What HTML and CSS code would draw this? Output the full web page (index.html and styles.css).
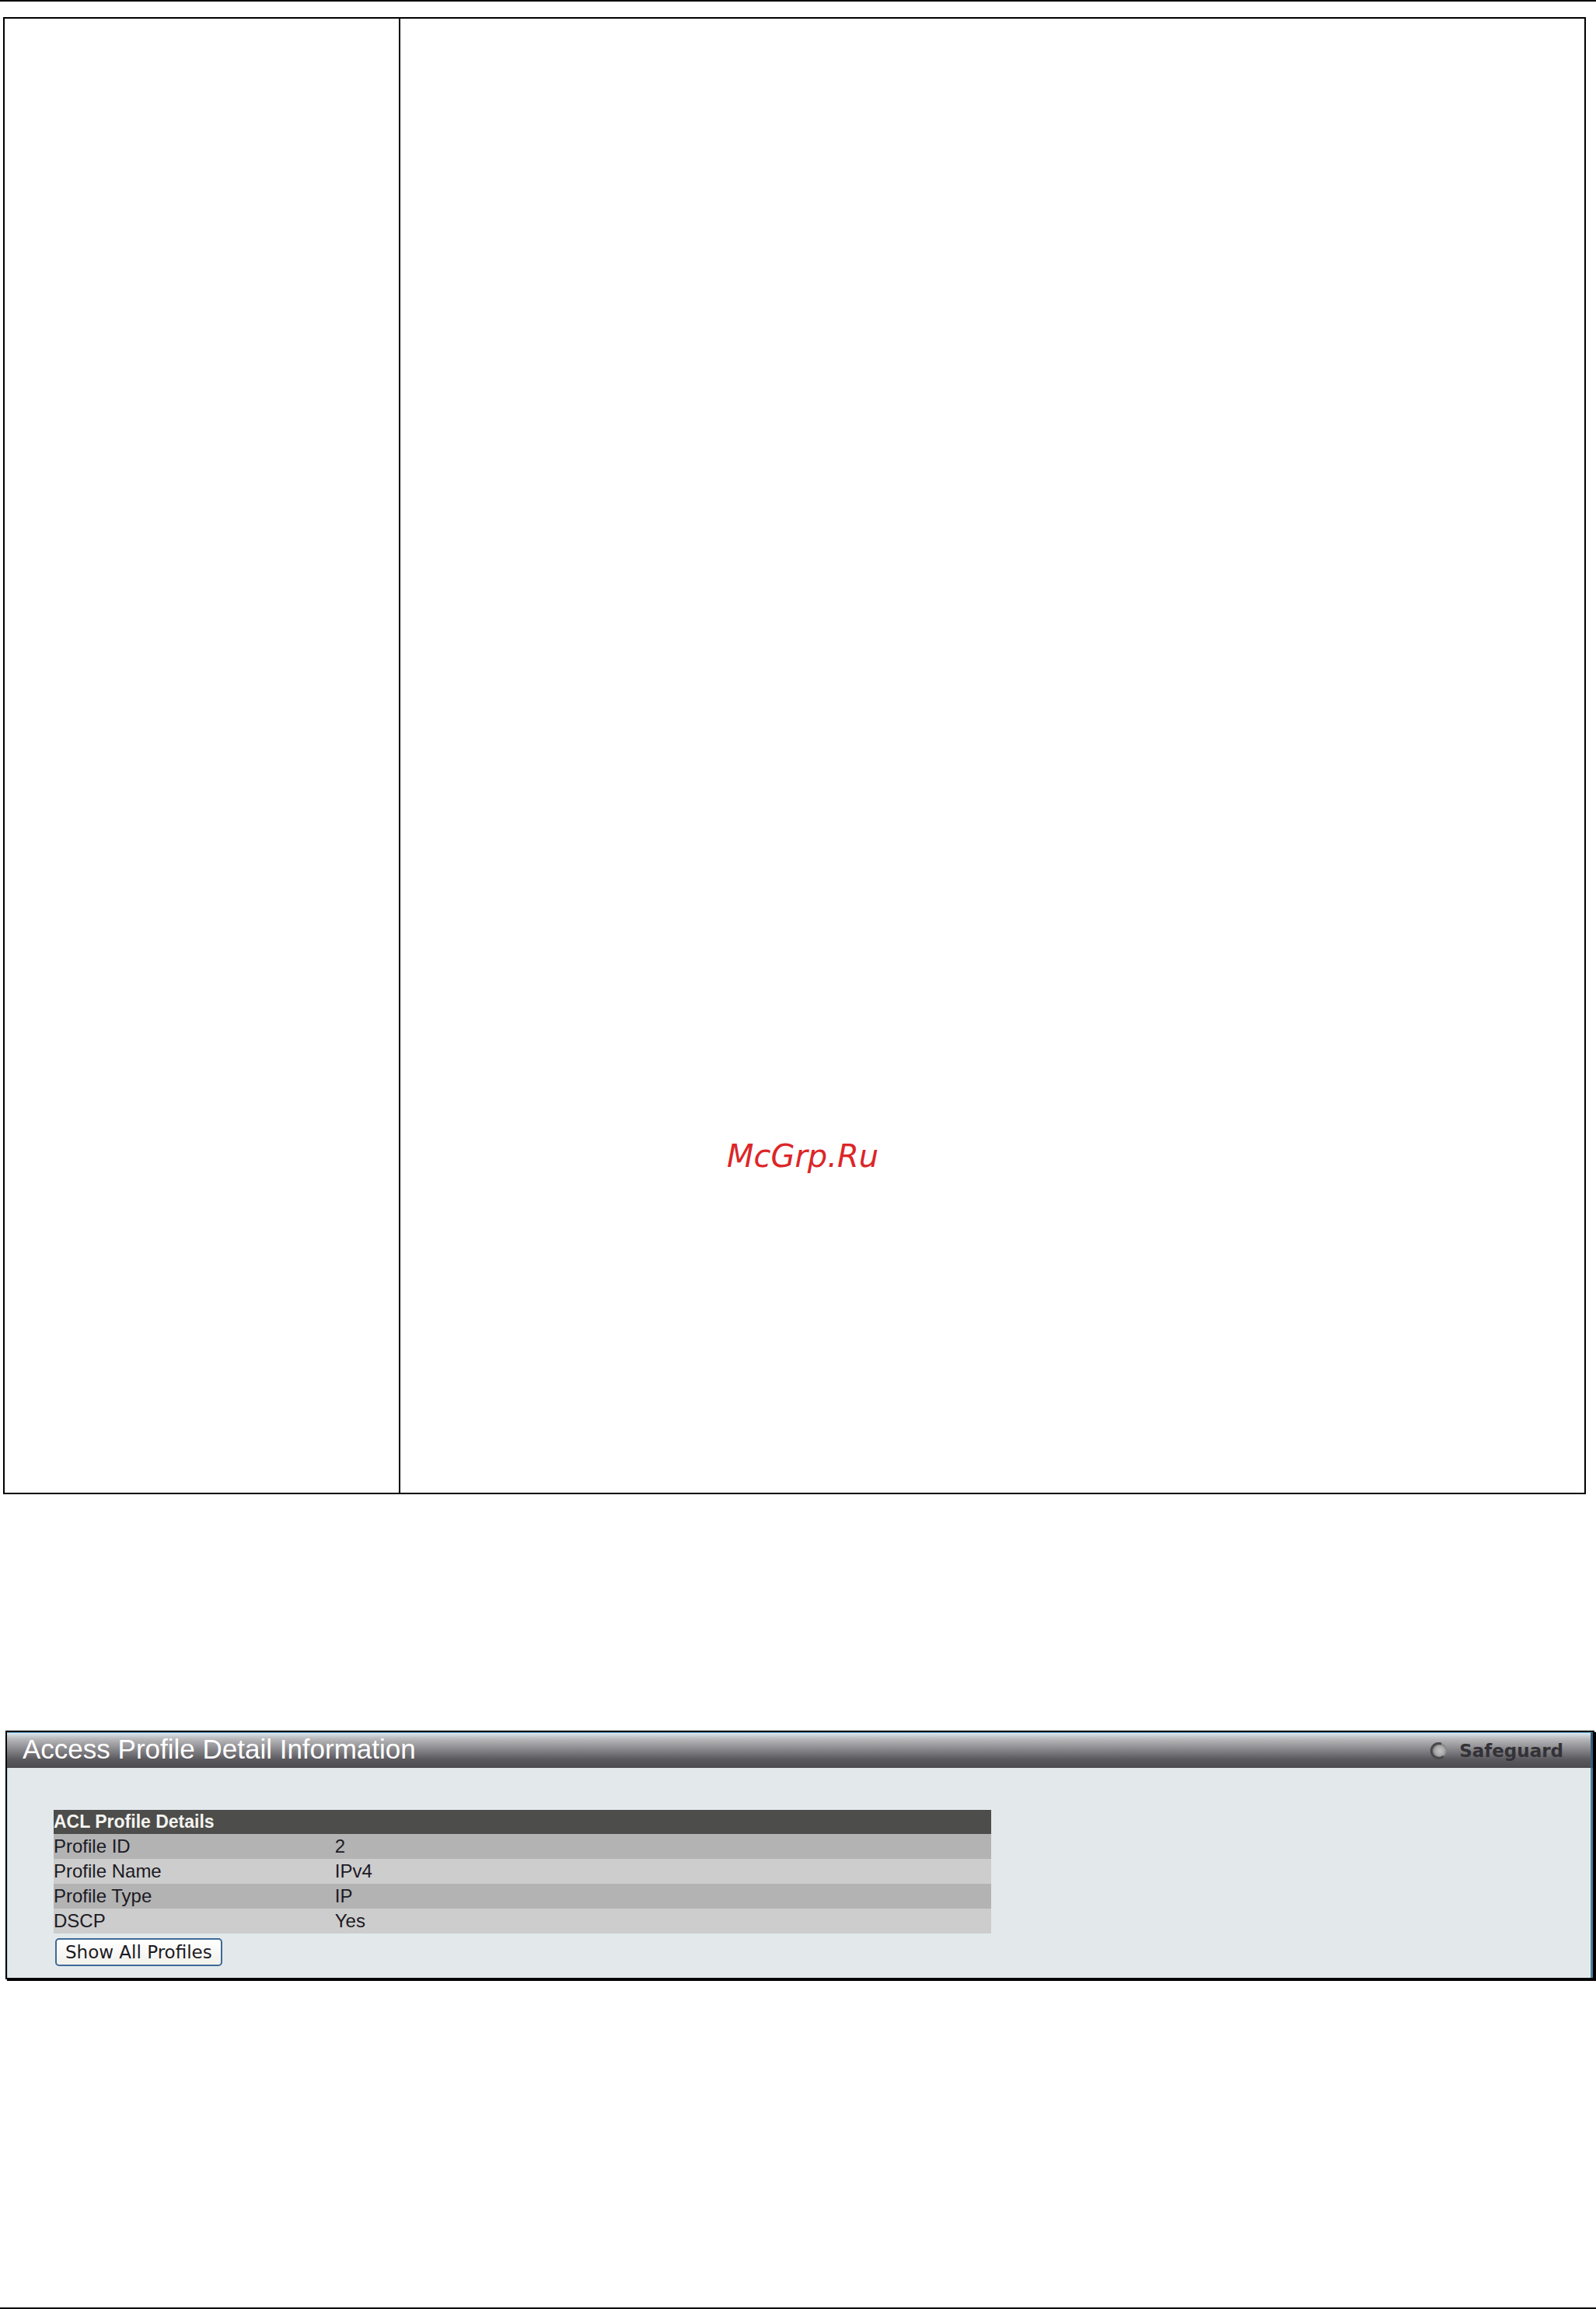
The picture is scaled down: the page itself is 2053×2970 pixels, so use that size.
FILE: index.html
```html
<!DOCTYPE html>
<html lang="en">
<head>
    <meta charset="UTF-8">
    <meta name="viewport" content="width=device-width, initial-scale=1.0">
    <title>Access Profile Detail Information</title>
    <link rel="stylesheet" href="styles.css">
</head>
<body>
    <table class="description">
        <tr><td class="parameter"></td><td></td></tr>
    </table>

    <div class="window">
        <div class="title-bar">
            <h1>Access Profile Detail Information</h1>
            <div class="safeguard">
                <svg width="24" height="24" viewBox="0 0 24 24">
                    <defs>
                        <radialGradient id="led" cx="0.55" cy="0.5" r="0.5">
                            <stop offset="0" stop-color="#c4c4c4"/>
                            <stop offset="0.6" stop-color="#a9a9aa"/>
                            <stop offset="1" stop-color="#6f6e71"/>
                        </radialGradient>
                    </defs>
                    <circle cx="12" cy="12" r="10" fill="url(#led)"/>
                    <path d="M15 3A9.500 9.500 0 1 0 18 19" fill="none" stroke="#49484c" stroke-width="3"/>
                </svg>
                <span>Safeguard</span>
            </div>
        </div>
        <div class="content">
            <table class="details">
                <tr><th colspan="2">ACL Profile Details</th></tr>
                <tr><td>Profile ID</td><td>2</td></tr>
                <tr><td>Profile Name</td><td>IPv4</td></tr>
                <tr><td>Profile Type</td><td>IP</td></tr>
                <tr><td>DSCP</td><td>Yes</td></tr>
            </table>
            <button type="button">Show All Profiles</button>
        </div>
    </div>

    <div class="watermark">McGrp.Ru</div>
</body>
</html>
```
FILE: styles.css
```css
* {
    box-sizing: border-box;
}
body {
    position: relative;
    display: flex;
    flex-direction: column;
    min-height: 100vh;
    margin: 0;
    padding: 20px 0 0;
    border-top: 2px solid #000;
    border-bottom: 2px solid #000;
    background: #fff;
    font-family: "Liberation Sans", Arial, sans-serif;
    color: #1c1a24;
}
table {
    border-collapse: collapse;
}
.description {
    height: 1900px;
    margin: 0 13px 0 4px;
    border: 2px solid #000;
}
.description td {
    padding: 0;
}
.description .parameter {
    width: 25%;
    border-right: 2px solid #000;
}
.window {
    margin: 304px 2px 0 7px;
    border: 2px solid #000;
    box-shadow: 2px 2px #000;
    background: #e3e9eb;
}
.title-bar {
    display: flex;
    align-items: center;
    justify-content: space-between;
    height: 46px;
    padding: 0 35px 0 20px;
    border-top: 1px solid #5b9cc4;
    border-right: 3px solid #2f5f80;
    background: linear-gradient(#d9e8f0, #bcbcbf 15%, #8b8a8e 45%, #5b5a5f 75%, #4c4b50);
}
h1 {
    margin: 0;
    padding-bottom: 4px;
    font-size: 35px;
    font-weight: normal;
    line-height: 40px;
    color: #fff;
}
.safeguard {
    display: flex;
    align-items: center;
    gap: 14px;
    font-family: "DejaVu Sans", Verdana, sans-serif;
    font-size: 23px;
    font-weight: bold;
    color: #333237;
}
.content {
    padding: 54px 0 15px 59px;
    border-left: 1px solid #a9d3e8;
    border-right: 3px solid #4a7f9f;
}
.details {
    width: 61%;
    font-size: 24px;
    line-height: 32px;
}
.details th {
    padding: 0;
    background: #4d4d4b;
    font-size: 23px;
    line-height: 31px;
    text-align: left;
    color: #f4f4f0;
}
.details td {
    padding: 0;
    background: #cdcdcd;
}
.details td:first-child {
    width: 30%;
}
.details tr:nth-child(even) td {
    background: #b3b3b3;
}
button {
    display: block;
    height: 36px;
    margin: 6px 0 0 2px;
    padding: 0 11px;
    border: 2px solid #3d6a99;
    border-radius: 5px;
    background: linear-gradient(#fff, #f1f0ea);
    font-family: "DejaVu Sans", Verdana, sans-serif;
    font-size: 23px;
    line-height: 30px;
    color: #1c1a24;
}
.watermark {
    position: absolute;
    top: 50%;
    left: 50%;
    padding: 4px 0 0 12px;
    transform: translate(-50%, -50%);
    font-family: "DejaVu Sans", Verdana, sans-serif;
    font-size: 40px;
    font-style: italic;
    color: #dc2628;
}
```
